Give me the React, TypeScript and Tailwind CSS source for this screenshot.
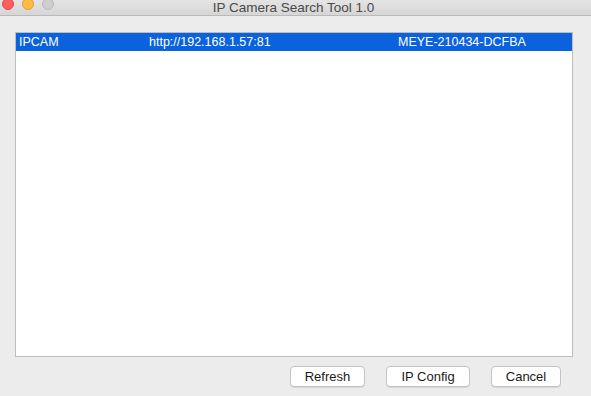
import { useState } from 'react'

type Cam = { name: string; url: string; id: string }

const cams: Cam[] = [{ name: 'IPCAM', url: 'http://192.168.1.57:81', id: 'MEYE-210434-DCFBA' }]

function Light({ color, border }: { color: string; border: string }) {
  return <span className={`block w-3 h-3 rounded-full border ${color} ${border}`} />
}

export default function App() {
  const [selected, setSelected] = useState(0)

  return (
    <div className="w-[591px] h-[396px] bg-[#ececec] flex flex-col overflow-hidden" style={{ fontFamily: '"Liberation Sans", Arial, sans-serif' }}>
      <div className="relative h-[16px] flex-shrink-0 bg-gradient-to-b from-[#e4e4e4] to-[#d6d6d6] border-b border-[#b9b9b9] flex items-start">
        <div className="flex gap-2 pl-[2px] -mt-[2px]">
          <Light color="bg-[#fc605c]" border="border-[#de4a45]" />
          <Light color="bg-[#fdbc40]" border="border-[#dea034]" />
          <Light color="bg-[#cfcfcf]" border="border-[#b8b8b8]" />
        </div>
        <div className="absolute inset-x-0 -top-[2px] pr-[4px] text-center text-[13.5px] text-[#4a4a4a]">IP Camera Search Tool 1.0</div>
      </div>

      <div className="flex-1 flex flex-col pl-[15px] pr-[18px] pt-[16px]">
        <div className="h-[325px] bg-white border border-[#bdbdbd]">
          {cams.map((c, i) => (
            <div
              key={c.id}
              onClick={() => setSelected(i)}
              className={`flex items-center h-[18px] text-[12.5px] ${selected === i ? 'bg-[#0a63dc] text-white' : 'text-black'}`}
            >
              <span className="w-[133px] pl-[3px]">{c.name}</span>
              <span className="w-[249px]">{c.url}</span>
              <span>{c.id}</span>
            </div>
          ))}
        </div>

        <div className="flex justify-end pr-[12px] mt-[9px] gap-[21px]">
          <button className="w-[75px] h-[21px] rounded-[4px] bg-white border border-[#c4c4c4] shadow-[0_1px_0_rgba(0,0,0,0.08)] text-[13px] text-[#1a1a1a]">Refresh</button>
          <button className="w-[84px] h-[21px] rounded-[4px] bg-white border border-[#c4c4c4] shadow-[0_1px_0_rgba(0,0,0,0.08)] text-[13px] text-[#1a1a1a]">IP Config</button>
          <button className="w-[70px] h-[21px] rounded-[4px] bg-white border border-[#c4c4c4] shadow-[0_1px_0_rgba(0,0,0,0.08)] text-[13px] text-[#1a1a1a]">Cancel</button>
        </div>
      </div>
    </div>
  )
}
